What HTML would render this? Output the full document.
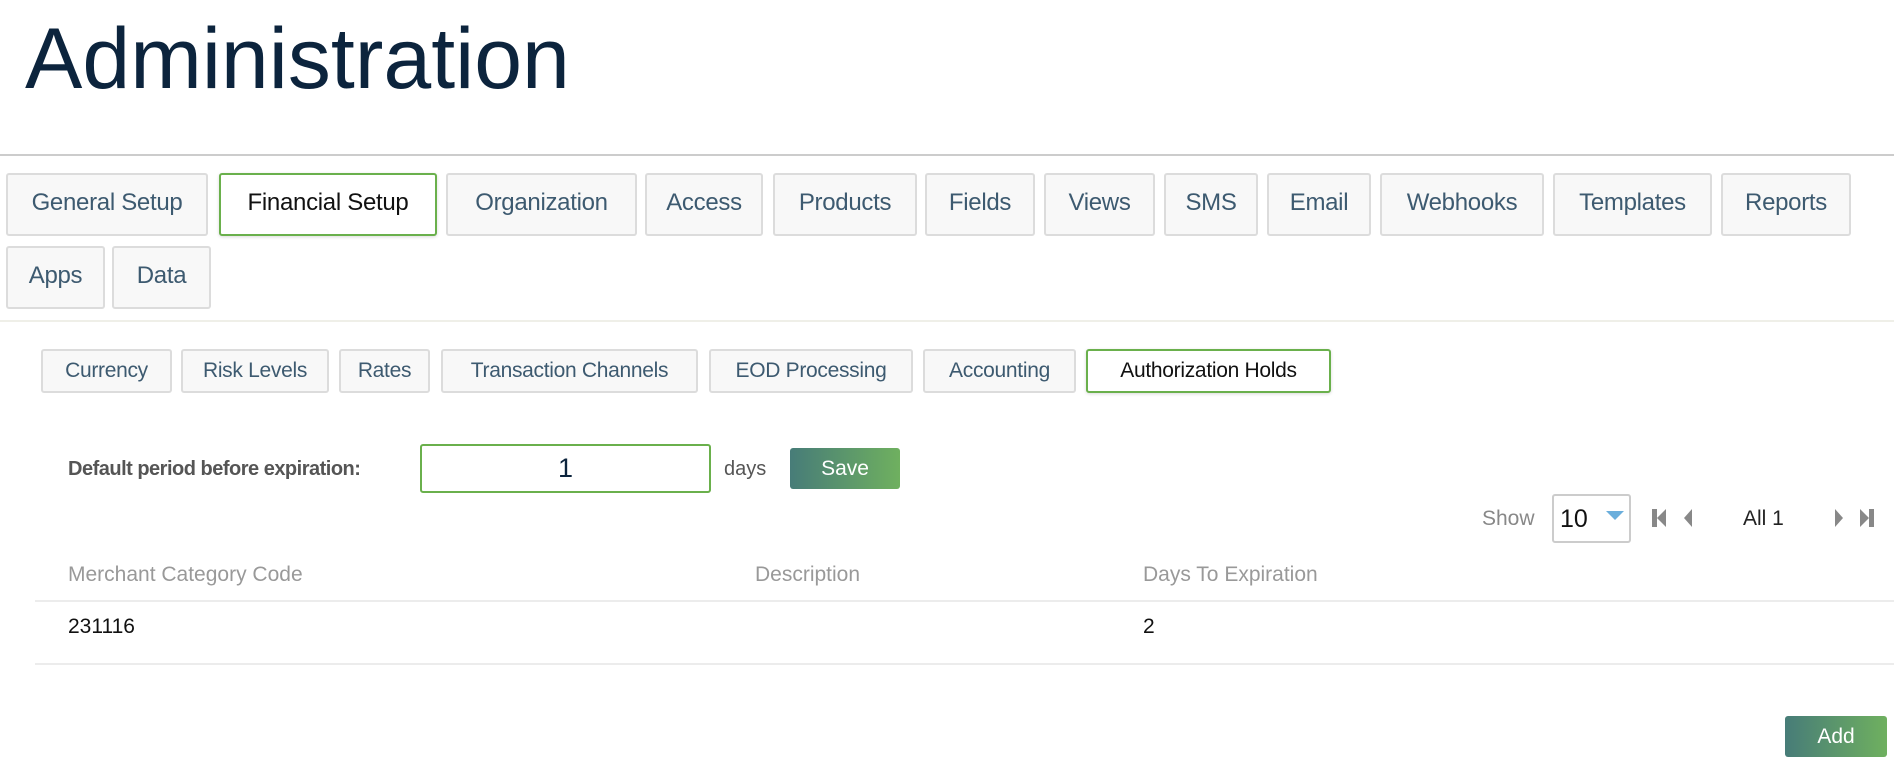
<!DOCTYPE html>
<html><head><meta charset="utf-8"><style>
*{box-sizing:border-box;margin:0;padding:0}
body{width:1894px;height:772px;background:#fff;font-family:"Liberation Sans",sans-serif;position:relative;overflow:hidden}
.a{position:absolute}
h1{position:absolute;left:25px;top:10px;font-size:86px;font-weight:400;color:#0c243d;letter-spacing:0px}
.t{position:absolute;background:#f8f8f8;border:2px solid #dcdcdc;border-radius:3px;color:#3d5a70;display:flex;align-items:center;justify-content:center;white-space:nowrap}
.top{height:63px;font-size:24px;letter-spacing:-0.3px;padding-bottom:3px}
.sub{height:44px;top:349px;font-size:21px;letter-spacing:-0.3px}
.act{background:#fff;border-color:#6ab04c;color:#111;box-shadow:0 1px 3px rgba(0,0,0,.15)}
.btn{position:absolute;border-radius:3px;color:#fff;display:flex;align-items:center;justify-content:center;background:linear-gradient(90deg,#477c78,#6fb05f);font-size:21px}
.g{color:#999;font-size:21px}
</style></head><body>
<h1>Administration</h1>
<div class="a" style="left:0;top:154px;width:1894px;height:2px;background:#ccc"></div>

<div class="t top" style="left:6px;top:173px;width:202px">General Setup</div>
<div class="t top act" style="left:219px;top:173px;width:218px">Financial Setup</div>
<div class="t top" style="left:446px;top:173px;width:191px">Organization</div>
<div class="t top" style="left:645px;top:173px;width:118px">Access</div>
<div class="t top" style="left:773px;top:173px;width:144px">Products</div>
<div class="t top" style="left:925px;top:173px;width:110px">Fields</div>
<div class="t top" style="left:1044px;top:173px;width:111px">Views</div>
<div class="t top" style="left:1164px;top:173px;width:94px">SMS</div>
<div class="t top" style="left:1267px;top:173px;width:104px">Email</div>
<div class="t top" style="left:1380px;top:173px;width:164px">Webhooks</div>
<div class="t top" style="left:1553px;top:173px;width:159px">Templates</div>
<div class="t top" style="left:1721px;top:173px;width:130px">Reports</div>
<div class="t top" style="left:6px;top:246px;width:99px">Apps</div>
<div class="t top" style="left:112px;top:246px;width:99px">Data</div>

<div class="a" style="left:0;top:320px;width:1894px;height:2px;background:#efefe8"></div>

<div class="t sub" style="left:41px;width:131px">Currency</div>
<div class="t sub" style="left:181px;width:148px">Risk Levels</div>
<div class="t sub" style="left:339px;width:91px">Rates</div>
<div class="t sub" style="left:441px;width:257px">Transaction Channels</div>
<div class="t sub" style="left:709px;width:204px">EOD Processing</div>
<div class="t sub" style="left:923px;width:153px">Accounting</div>
<div class="t sub act" style="left:1086px;width:245px">Authorization Holds</div>

<div class="a" style="left:68px;top:458px;font-size:20px;color:#555;font-weight:bold;letter-spacing:-0.5px">Default period before expiration:</div>
<div class="a" style="left:420px;top:444px;width:291px;height:49px;border:2px solid #6ab04c;border-radius:3px;display:flex;align-items:center;justify-content:center;font-size:27px;color:#0c243d">1</div>
<div class="a" style="left:724px;top:458px;font-size:20px;color:#555">days</div>
<div class="btn" style="left:790px;top:448px;width:110px;height:41px">Save</div>

<div class="a g" style="left:1482px;top:507px;color:#888">Show</div>
<div class="a" style="left:1552px;top:494px;width:79px;height:49px;border:2px solid #ccc;border-radius:3px;font-size:25px;color:#111;padding:9px 0 0 6px">10</div>
<svg class="a" style="left:1606px;top:511px" width="18" height="10"><path d="M0 0H18L9 9Z" fill="#6aaedc"/></svg>
<svg class="a" style="left:1650px;top:507px" width="50" height="22"><path d="M2 2H7V20H2Z M7 11L16 2V20Z M34 11L42 2V20Z" fill="#888"/></svg>
<div class="a" style="left:1743px;top:507px;font-size:21px;color:#222">All 1</div>
<svg class="a" style="left:1833px;top:507px" width="50" height="22"><path d="M2 2L10 11L2 20Z M27 2L36 11L27 20Z M36 2H41V20H36Z" fill="#888"/></svg>

<div class="a g" style="left:68px;top:563px">Merchant Category Code</div>
<div class="a g" style="left:755px;top:563px">Description</div>
<div class="a g" style="left:1143px;top:563px">Days To Expiration</div>
<div class="a" style="left:35px;top:600px;width:1859px;height:2px;background:#ececec"></div>
<div class="a" style="left:68px;top:615px;font-size:21px;color:#111">231116</div>
<div class="a" style="left:1143px;top:615px;font-size:21px;color:#111">2</div>
<div class="a" style="left:35px;top:663px;width:1859px;height:2px;background:#ececec"></div>

<div class="btn" style="left:1785px;top:716px;width:102px;height:41px">Add</div>
</body></html>
